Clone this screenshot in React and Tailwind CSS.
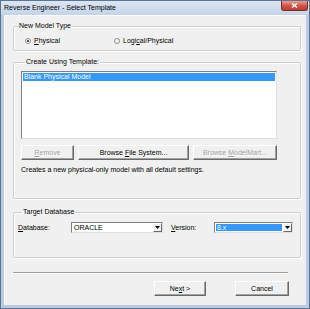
import React from "react";

const font = { fontFamily: '"Liberation Sans", Arial, sans-serif' };

// Classic raised push button
function Btn({ children, disabled, className = "" }) {
  return (
    <div
      className={`h-[15px] flex items-center justify-center bg-[#f0f0f0] border border-t-white border-l-white border-r-[#696969] border-b-[#696969] shadow-[inset_-1px_-1px_0_#a0a0a0] text-[7px] leading-[8px] ${
        disabled ? "text-[#a0a0a0] [text-shadow:1px_1px_0_#fff]" : "text-black"
      } ${className}`}
    >
      {children}
    </div>
  );
}

function Combo({ value, selected, className = "" }) {
  return (
    <div
      className={`h-[11px] flex items-stretch bg-white border border-t-[#808080] border-l-[#808080] border-r-[#e0e0e0] border-b-[#e0e0e0] ${className}`}
    >
      <div className="flex-1 flex items-center p-[1px]">
        <div
          className={`h-full flex-1 flex items-center pl-[1px] text-[7px] leading-[8px] ${
            selected ? "bg-[#3399ff] text-white" : "text-black"
          }`}
        >
          {value}
        </div>
      </div>
      <div className="w-[9px] flex items-center justify-center bg-[#f0f0f0] border border-t-white border-l-white border-r-[#696969] border-b-[#696969]">
        <svg width="5" height="3" viewBox="0 0 5 3">
          <path d="M0 0h5L2.5 3z" fill="#000" />
        </svg>
      </div>
    </div>
  );
}

function Radio({ checked }) {
  return (
    <span className="w-[6px] h-[6px] rounded-full border border-[#8e8f8f] bg-[#f4f4f4] flex items-center justify-center">
      {checked && <span className="w-[2px] h-[2px] rounded-full bg-[#202020]" />}
    </span>
  );
}

function Group({ title, className = "", children }) {
  return (
    <fieldset
      className={`mx-[8px] mr-[5px] border border-[#cfcfcf] rounded-[2px] shadow-[inset_1px_1px_0_#fff,1px_1px_0_#fff] ${className}`}
    >
      <legend className="ml-[4px] px-[1px] text-[7px] leading-[8px] text-black">
        {title}
      </legend>
      {children}
    </fieldset>
  );
}

export default function App() {
  return (
    <div
      style={font}
      className="w-[310px] h-[309px] flex flex-col bg-[#b9cbe2] border border-[#5d7593] overflow-hidden"
    >
      {/* Title bar */}
      <div className="h-[14px] flex items-start justify-between bg-gradient-to-b from-[#dce6f2] to-[#c3d4e9]">
        <span className="ml-[3px] mt-[3px] text-[7px] leading-[8px] text-black">
          Reverse Engineer - Select Template
        </span>
        <div className="mr-[1px] w-[27px] h-[10px] rounded-b-[3px] border border-t-0 border-[#7a2a24] bg-gradient-to-b from-[#e8a192] via-[#d2574a] to-[#c23a2c] flex items-center justify-center">
          <svg width="7" height="5" viewBox="0 0 7 5">
            <path d="M1 0.5l5 4M6 0.5l-5 4" stroke="#fff" strokeWidth="1.4" />
          </svg>
        </div>
      </div>

      {/* Client area */}
      <div className="mx-[3px] h-[290px] bg-[#f0f0f0] border-l border-t border-white flex flex-col">
        <Group title="New Model Type" className="mt-[6px] pt-[7px] pb-[5px]">
          <div className="flex items-center h-[8px] text-[7px] leading-[8px]">
            <div className="ml-[11px] w-[89px] flex items-center gap-[3px]">
              <Radio checked />
              <span>
                <u>P</u>hysical
              </span>
            </div>
            <div className="flex items-center gap-[3px]">
              <Radio />
              <span>
                Logi<u>c</u>al/Physical
              </span>
            </div>
          </div>
        </Group>

        <Group title="Create Using Template:" className="mt-[7px] pt-[5px] pb-[24px] pl-[7px] pr-[23px]">
          <div className="h-[68px] bg-white border border-t-[#808080] border-l-[#808080] border-r-[#e0e0e0] border-b-[#e0e0e0] p-[1px]">
            <div className="h-[8px] bg-[#3399ff] text-white text-[7px] leading-[8px] pl-[1px]">
              Blank Physical Model
            </div>
          </div>
          <div className="mt-[6px] flex gap-[4px]">
            <Btn disabled className="w-[53px]">
              <span>
                <u>R</u>emove
              </span>
            </Btn>
            <Btn className="w-[111px]">
              <span>
                Browse <u>F</u>ile System...
              </span>
            </Btn>
            <Btn disabled className="flex-1">
              <span>
                Browse <u>M</u>odelMart...
              </span>
            </Btn>
          </div>
          <div className="mt-[6px] text-[7px] leading-[8px] text-black">
            Creates a new physical-only model with all default settings.
          </div>
        </Group>

        <Group title="Target Database" className="mt-[9px] pt-[6px] pb-[24px] pl-[4px] pr-[7px]">
          <div className="flex items-center h-[11px] text-[7px] leading-[8px]">
            <span className="w-[53px]">
              <u>D</u>atabase:
            </span>
            <Combo value="ORACLE" className="w-[92px]" />
            <span className="ml-[8px] w-[43px]">
              <u>V</u>ersion:
            </span>
            <Combo value="8.x" selected className="flex-1" />
          </div>
        </Group>

        {/* Separator */}
        <div className="mt-[14px] ml-[8px] w-[275px] h-[2px] border-t border-[#a0a0a0] border-b border-b-white" />

        <div className="mt-[7px] flex">
          <Btn className="ml-[149px] w-[52px]">
            <span>
              Ne<u>x</u>t &gt;
            </span>
          </Btn>
          <Btn className="ml-[29px] w-[54px]">Cancel</Btn>
        </div>
      </div>
    </div>
  );
}
